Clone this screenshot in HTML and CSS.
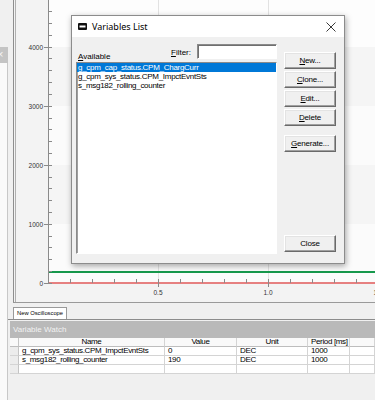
FILE: index.html
```html
<!DOCTYPE html>
<html>
<head>
<meta charset="utf-8">
<link rel="stylesheet" href="styles.css">
</head>
<body>
<div class="screen">
  <div class="dock">
    <div class="dock-top"></div>
    <div class="dock-tab">×</div>
    <div class="dock-rest"></div>
  </div>
  <div class="main">
    <div class="scope-area">
      <div class="scope-frame">
        <svg class="plot" width="361" height="302" viewBox="0 0 361 302">
          <rect x="0" y="0" width="361" height="302" fill="#f3f3f3"/>
          <line x1="1.5" y1="0" x2="1.5" y2="302" stroke="#b0b0b0"/>
          <rect x="34" y="0" width="327" height="47" fill="#fdfdfd"/>
          <rect x="34" y="47" width="327" height="59" fill="#f5f5f5"/>
          <rect x="34" y="106" width="327" height="59" fill="#fbfbfb"/>
          <rect x="34" y="165" width="327" height="59" fill="#f5f5f5"/>
          <rect x="34" y="224" width="327" height="59" fill="#fbfbfb"/>
          <g stroke="#e2e2e2">
            <line x1="144.5" y1="0" x2="144.5" y2="283"/>
            <line x1="254.5" y1="0" x2="254.5" y2="283"/>
          </g>
          <rect x="34" y="271" width="327" height="2" fill="#17984c"/>
          <rect x="34" y="282" width="327" height="2" fill="#e68080"/>
          <line x1="34.5" y1="0" x2="34.5" y2="284" stroke="#8a8a8a"/>
          <g stroke="#8a8a8a">
            <line x1="34" y1="11.5" x2="38" y2="11.5"/>
            <line x1="34" y1="23.5" x2="38" y2="23.5"/>
            <line x1="34" y1="35.5" x2="38" y2="35.5"/>
            <line x1="30" y1="47.5" x2="38" y2="47.5"/>
            <line x1="34" y1="58.5" x2="38" y2="58.5"/>
            <line x1="34" y1="70.5" x2="38" y2="70.5"/>
            <line x1="34" y1="82.5" x2="38" y2="82.5"/>
            <line x1="34" y1="94.5" x2="38" y2="94.5"/>
            <line x1="30" y1="106.5" x2="38" y2="106.5"/>
            <line x1="34" y1="118.5" x2="38" y2="118.5"/>
            <line x1="34" y1="129.5" x2="38" y2="129.5"/>
            <line x1="34" y1="141.5" x2="38" y2="141.5"/>
            <line x1="34" y1="153.5" x2="38" y2="153.5"/>
            <line x1="30" y1="165.5" x2="38" y2="165.5"/>
            <line x1="34" y1="177.5" x2="38" y2="177.5"/>
            <line x1="34" y1="188.5" x2="38" y2="188.5"/>
            <line x1="34" y1="200.5" x2="38" y2="200.5"/>
            <line x1="34" y1="212.5" x2="38" y2="212.5"/>
            <line x1="30" y1="224.5" x2="38" y2="224.5"/>
            <line x1="34" y1="236.5" x2="38" y2="236.5"/>
            <line x1="34" y1="247.5" x2="38" y2="247.5"/>
            <line x1="34" y1="259.5" x2="38" y2="259.5"/>
            <line x1="34" y1="271.5" x2="38" y2="271.5"/>
            <line x1="30" y1="283.5" x2="38" y2="283.5"/>
            <line x1="56.5" y1="279" x2="56.5" y2="283"/>
            <line x1="78.5" y1="279" x2="78.5" y2="283"/>
            <line x1="100.5" y1="279" x2="100.5" y2="283"/>
            <line x1="122.5" y1="279" x2="122.5" y2="283"/>
            <line x1="144.5" y1="279" x2="144.5" y2="287"/>
            <line x1="166.5" y1="279" x2="166.5" y2="283"/>
            <line x1="188.5" y1="279" x2="188.5" y2="283"/>
            <line x1="210.5" y1="279" x2="210.5" y2="283"/>
            <line x1="232.5" y1="279" x2="232.5" y2="283"/>
            <line x1="254.5" y1="279" x2="254.5" y2="287"/>
            <line x1="276.5" y1="279" x2="276.5" y2="283"/>
            <line x1="298.5" y1="279" x2="298.5" y2="283"/>
            <line x1="320.5" y1="279" x2="320.5" y2="283"/>
            <line x1="342.5" y1="279" x2="342.5" y2="283"/>
          </g>
          <g class="axis-text" text-anchor="end">
            <text x="29" y="49.5">4000</text>
            <text x="29" y="108.5">3000</text>
            <text x="29" y="167.5">2000</text>
            <text x="29" y="226.5">1000</text>
            <text x="29" y="285.5">0</text>
          </g>
          <g class="axis-text" text-anchor="middle">
            <text x="144" y="294.5">0.5</text>
            <text x="254" y="294.5">1.0</text>
            <text x="364" y="294.5">1.5</text>
          </g>
        </svg>
      </div>
    </div>
    <div class="tabstrip">
      <div class="tab">New Oscilloscope</div>
    </div>
    <div class="watch">
      <div class="watch-title">Variable Watch</div>
      <div class="grid">
        <div class="cell rh hd"></div>
        <div class="cell hd center">Name</div>
        <div class="cell hd center">Value</div>
        <div class="cell hd center">Unit</div>
        <div class="cell hd">Period [ms]</div>
        <div class="cell hd"></div>

        <div class="cell rh"></div>
        <div class="cell">g_cpm_sys_status.CPM_ImpctEvntSts</div>
        <div class="cell">0</div>
        <div class="cell">DEC</div>
        <div class="cell">1000</div>
        <div class="cell"></div>

        <div class="cell rh"></div>
        <div class="cell">s_msg182_rolling_counter</div>
        <div class="cell">190</div>
        <div class="cell">DEC</div>
        <div class="cell">1000</div>
        <div class="cell"></div>

        <div class="cell rh"></div>
        <div class="cell"></div>
        <div class="cell"></div>
        <div class="cell"></div>
        <div class="cell"></div>
        <div class="cell"></div>
      </div>
    </div>
  </div>

  <div class="dialog">
    <div class="titlebar">
      <svg class="sysicon" width="9" height="7" viewBox="0 0 9 7">
        <rect x="0" y="0" width="9" height="7" rx="1" fill="#111"/>
        <rect x="1.5" y="2.5" width="6" height="2" fill="#fff"/>
      </svg>
      <span class="title">Variables List</span>
      <svg class="close-x" width="10" height="10" viewBox="0 0 10 10">
        <path d="M0.5 0.5 L9.5 9.5 M9.5 0.5 L0.5 9.5" stroke="#222" stroke-width="0.9" fill="none"/>
      </svg>
    </div>
    <div class="client">
      <div class="left-pane">
        <div class="top-row">
          <span class="label-available"><u>A</u>vailable</span>
          <div class="filter">
            <span class="filter-label"><u>F</u>ilter:</span>
            <div class="filter-box"></div>
          </div>
        </div>
        <div class="listbox">
          <div class="item selected">g_cpm_cap_status.CPM_ChargCurr</div>
          <div class="item">g_cpm_sys_status.CPM_ImpctEvntSts</div>
          <div class="item">s_msg182_rolling_counter</div>
        </div>
      </div>
      <div class="buttons">
        <div class="btn"><u>N</u>ew...</div>
        <div class="btn"><u>C</u>lone...</div>
        <div class="btn"><u>E</u>dit...</div>
        <div class="btn"><u>D</u>elete</div>
        <div class="btn gen"><u>G</u>enerate...</div>
        <div class="btn close">Close</div>
      </div>
    </div>
  </div>
</div>
</body>
</html>
```

FILE: styles.css
```css
* { box-sizing: border-box; }
html, body { margin: 0; padding: 0; }
body {
  width: 375px;
  height: 400px;
  overflow: hidden;
  background: #f0f0f0;
  font-family: "Liberation Sans", Arial, sans-serif;
  color: #000;
}
.screen {
  position: relative;
  display: flex;
  width: 375px;
  height: 400px;
}
.dock {
  width: 8px;
  display: flex;
  flex-direction: column;
}
.dock-top { height: 47px; }
.dock-tab {
  height: 16px;
  background: #c4c4c4;
  color: #f4f4f4;
  font-size: 11px;
  line-height: 15px;
  overflow: hidden;
  text-indent: -3px;
}
.dock-rest {
  flex: 1;
  background: #fafafa;
  border-right: 1px solid #c8c8c8;
}
.main {
  flex: 1;
  min-width: 0;
  display: flex;
  flex-direction: column;
}
.scope-area {
  height: 303px;
  padding-left: 5px;
}
.scope-frame {
  height: 303px;
  border-left: 1px solid #8e8e8e;
  border-bottom: 1px solid #9a9a9a;
  overflow: hidden;
}
.plot { display: block; }
.axis-text {
  font-family: "Liberation Sans", Arial, sans-serif;
  font-size: 6.5px;
  fill: #333;
}
.tabstrip {
  height: 17px;
  padding-left: 5px;
  border-bottom: 1px solid #8c8c8c;
  display: flex;
  align-items: flex-end;
}
.tab {
  height: 12px;
  padding: 0 3px;
  background: #fff;
  border: 1px solid #9a9a9a;
  border-bottom: none;
  font-size: 5.8px;
  line-height: 11px;
  white-space: nowrap;
}
.watch {
  flex: 1;
  padding-left: 2px;
  padding-top: 1px;
}
.watch-title {
  height: 17px;
  background: #b9b9b9;
  color: #f2f2f2;
  font-size: 8px;
  line-height: 17px;
  padding-left: 3px;
}
.grid {
  display: grid;
  grid-template-columns: 9px 146px 72px 71px 42px 25px;
  grid-auto-rows: 9px;
  font-size: 8px;
  letter-spacing: -0.35px;
}
.cell {
  border-right: 1px solid #d4d4d4;
  border-bottom: 1px solid #d4d4d4;
  background: #fff;
  padding-left: 3px;
  line-height: 8px;
  white-space: nowrap;
  overflow: hidden;
}
.cell.rh { background: #ececec; border-right-color: #c4c4c4; }
.cell.hd { background: #f9f9f9; border-bottom-color: #bdbdbd; }
.cell.center { text-align: center; padding-left: 0; }

/* Dialog */
.dialog {
  position: absolute;
  left: 71px;
  top: 15px;
  width: 274px;
  height: 249px;
  background: #f0f0f0;
  border: 1px solid #8c8c8c;
  box-shadow: 1px 2px 6px rgba(0, 0, 0, 0.35);
  display: flex;
  flex-direction: column;
}
.titlebar {
  height: 21px;
  background: #fff;
  display: flex;
  align-items: center;
  padding-left: 6px;
  padding-right: 8px;
}
.sysicon { display: block; }
.title {
  margin-left: 5px;
  font-family: "Noto Sans", "Liberation Sans", sans-serif;
  font-size: 9px;
  color: #000;
}
.close-x { display: block; margin-left: auto; }
.client {
  flex: 1;
  display: flex;
  padding: 0 8px 9px 4px;
  font-size: 8px;
}
.left-pane {
  width: 201px;
  display: flex;
  flex-direction: column;
}
.top-row {
  height: 25px;
  display: flex;
  align-items: flex-end;
}
.label-available {
  margin-left: 2px;
  margin-bottom: 1px;
  line-height: 9px;
}
.filter {
  margin-left: auto;
  margin-bottom: 3px;
  display: flex;
  align-items: center;
}
.filter-label { line-height: 9px; padding-top: 2px; margin-right: 6px; }
.filter-box {
  width: 80px;
  height: 15px;
  background: #fff;
  border: 1px solid;
  border-color: #8a8a8a #ffffff #ffffff #8a8a8a;
  box-shadow: inset 1px 1px #6f6f6f;
}
.listbox {
  flex: 1;
  background: #fff;
  border: 1px solid;
  border-color: #8a8a8a #ffffff #ffffff #8a8a8a;
  box-shadow: inset 1px 0 #a0a0a0;
  letter-spacing: -0.28px;
}
.item {
  height: 9px;
  line-height: 9px;
  padding-left: 1px;
  white-space: nowrap;
}
.item.selected { background: #0078d7; color: #fff; }
.buttons {
  width: 52px;
  margin-left: 7px;
  padding-top: 15px;
  padding-bottom: 2px;
  display: flex;
  flex-direction: column;
}
.btn {
  height: 17px;
  margin-bottom: 2px;
  border: 1px solid;
  border-color: #ffffff #6a6a6a #6a6a6a #ffffff;
  box-shadow: inset -1px -1px #a0a0a0, inset 1px 1px #e3e3e3;
  background: #f0f0f0;
  text-align: center;
  line-height: 15px;
  letter-spacing: -0.2px;
}
.btn.gen { margin-top: 7px; }
.btn.close { margin-top: auto; margin-bottom: 0; }
```
